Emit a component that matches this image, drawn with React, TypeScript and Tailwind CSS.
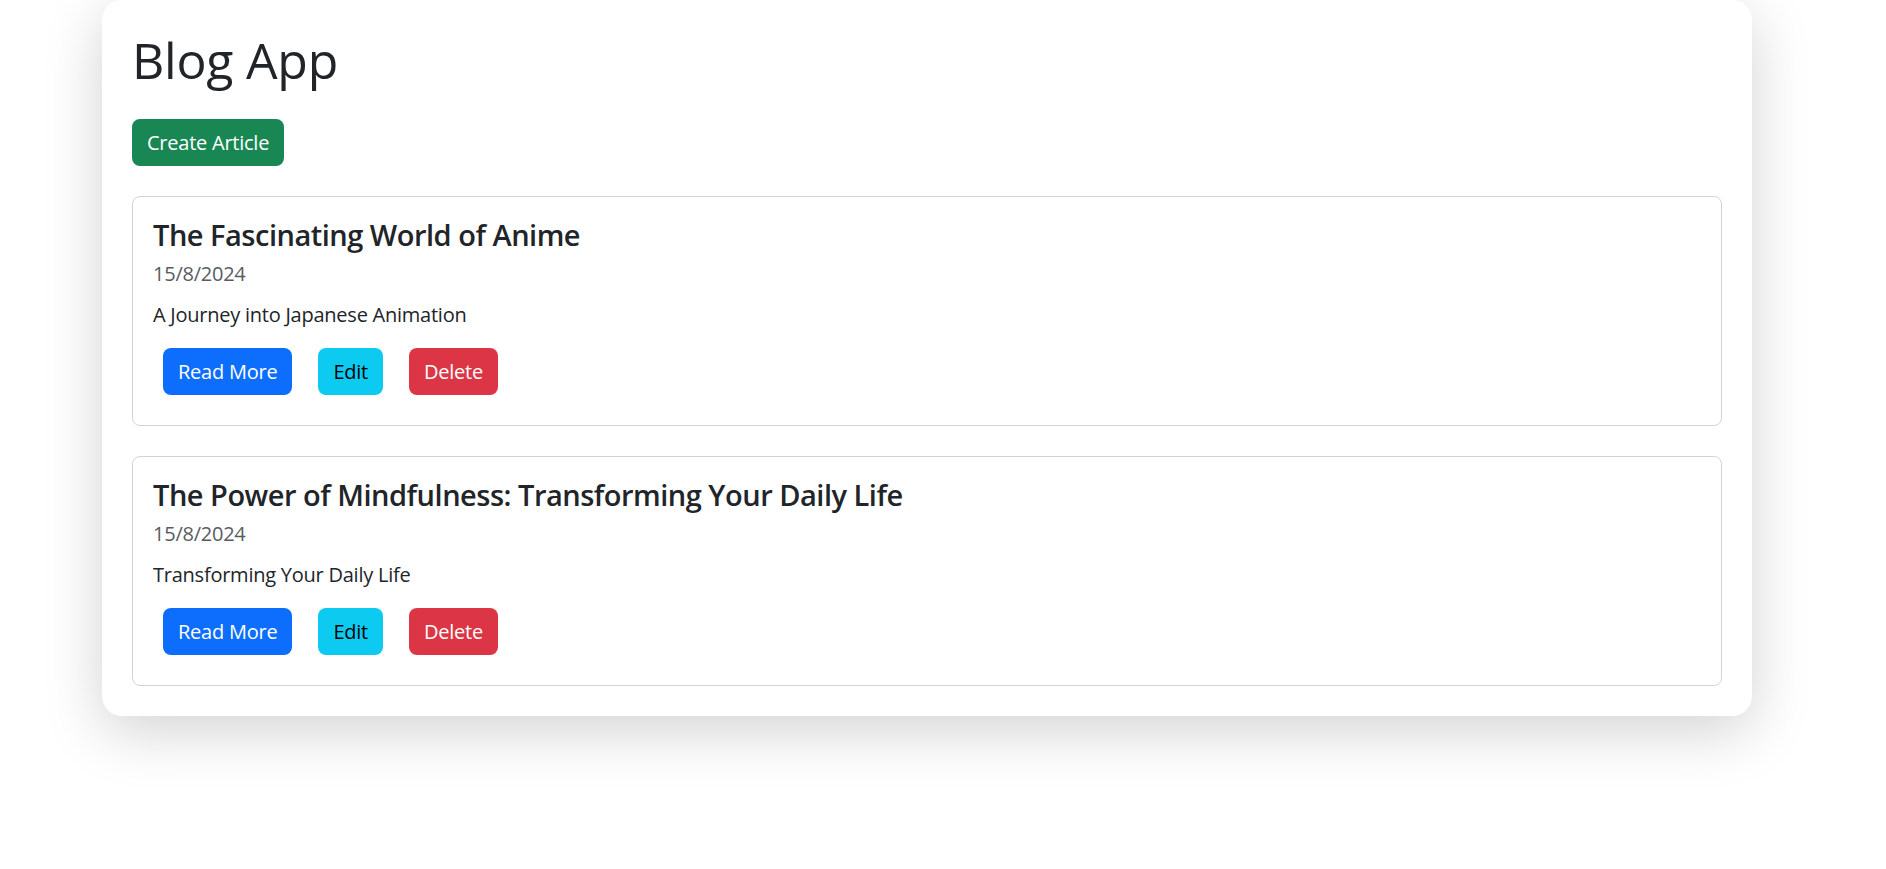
import React from "react";

type Article = {
  title: string;
  date: string;
  summary: string;
};

const articles: Article[] = [
  {
    title: "The Fascinating World of Anime",
    date: "15/8/2024",
    summary: "A Journey into Japanese Animation",
  },
  {
    title: "The Power of Mindfulness: Transforming Your Daily Life",
    date: "15/8/2024",
    summary: "Transforming Your Daily Life",
  },
];

function ArticleCard({ article }: { article: Article }) {
  return (
    <div className="mb-[30px] rounded-[8px] border border-[#d3d3d3] px-[20px] pt-[20px] pb-[30px]">
      <h5 className="text-[29px] leading-[36px] font-semibold tracking-[-0.017em] text-[#212529]">{article.title}</h5>
      <div className="mt-[6px] text-[20px] leading-[30px] text-[#595c5f]">{article.date}</div>
      <p className="mt-[11px] text-[20px] leading-[30px] text-[#212529]">{article.summary}</p>
      <div className="mt-[18px] flex items-center gap-[26px] pl-[10px]">
        <button className="h-[47px] rounded-[8px] bg-[#0d6efd] px-[15px] text-[20px] text-white">
          Read More
        </button>
        <button className="h-[47px] rounded-[8px] bg-[#0dcaf0] px-[15px] text-[20px] text-black">
          Edit
        </button>
        <button className="h-[47px] rounded-[8px] bg-[#dc3545] px-[15px] text-[20px] text-white">
          Delete
        </button>
      </div>
    </div>
  );
}

export default function App() {
  return (
    <div className="min-h-screen bg-white pl-[102px] font-['Open_Sans',sans-serif] tracking-[-0.015em]">
      <div className="w-[1650px] rounded-[20px] bg-white px-[30px] pt-[30px] pb-0 shadow-[0_15px_60px_rgba(0,0,0,0.18)] flow-root">
        <h1 className="text-[50px] leading-[60px] font-medium text-[#212529]">Blog App</h1>
        <button className="mt-[29px] h-[47px] rounded-[8px] bg-[#198754] px-[15px] text-[20px] text-white">
          Create Article
        </button>
        <div className="mt-[30px]">
          {articles.map((a) => (
            <ArticleCard key={a.title} article={a} />
          ))}
        </div>
      </div>
    </div>
  );
}
